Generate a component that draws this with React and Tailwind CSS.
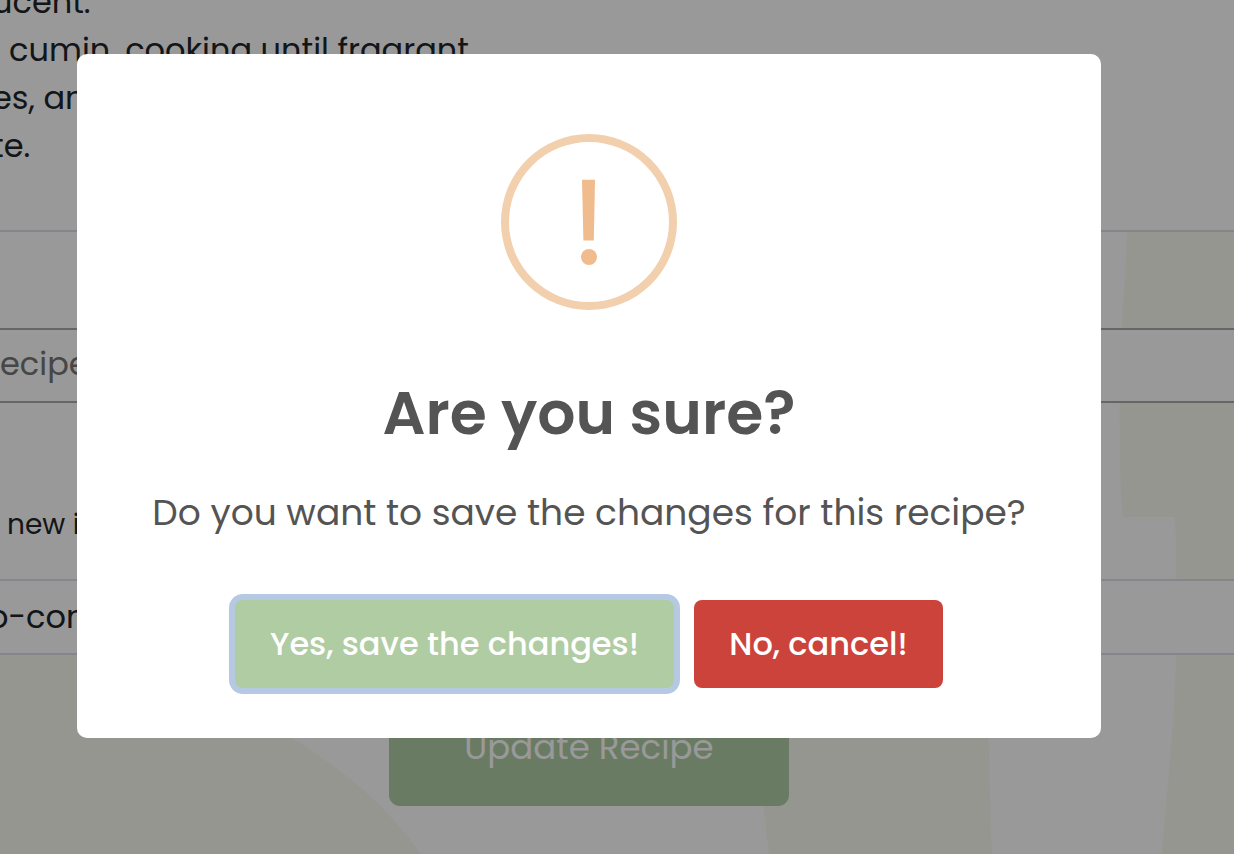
const steps = [
  'ucent.',
  '\u00a0\u00a0cumin, cooking until fragrant.',
  'es, and',
  'te.',
];

function Backdrop() {
  return (
    <svg
      className="pointer-events-none absolute top-0 left-0 h-[854px] w-[1234px] fill-[#f8fbee]"
      viewBox="0 0 1234 854"
      aria-hidden="true"
    >
      <path d="M1129 200 C1126 270 1121 330 1120 380 C1119 440 1120 490 1123 517 H1175 C1177 570 1177 640 1175 690 C1172 750 1165 810 1162 854 H1234 V200 Z" />
      <path d="M0 640 H150 C200 670 250 705 292 738 C350 774 388 808 421 854 H0 Z" />
      <path d="M748 690 C755 750 763 800 769 854 H992 C989 800 990 740 986 690 Z" />
    </svg>
  );
}

function Page() {
  return (
    <main className="relative overflow-hidden bg-white text-[32px] leading-[48px] text-[#212529]">
      <Backdrop />
      <div className="relative">
        <section className="flow-root h-[232px] border-b-2 border-[#dedfe8] bg-white">
          <div className="-mt-[22px] -ml-2 whitespace-nowrap">
            {steps.map((step) => (
              <p key={step}>{step}</p>
            ))}
          </div>
        </section>
        <input
          type="text"
          aria-label="Recipe"
          placeholder="ecipe"
          className="mt-24 block h-[75px] w-full border-y-2 border-[#aaaaaa] bg-white pb-1 placeholder-[#757575] outline-none"
        />
        <label htmlFor="image" className="mt-[98px] ml-[7px] block text-[28px]">
          new image
        </label>
        <input
          id="image"
          type="text"
          readOnly
          defaultValue="o-con"
          className="mt-[30px] -ml-3 block h-[76px] w-[calc(100%+12px)] border-y-2 border-[#dedfe8] bg-white outline-none"
        />
        <div className="flex justify-center pt-[33px] pr-14 pb-12">
          <button
            type="button"
            className="h-[118px] w-[400px] rounded-[11px] bg-[#afcda3] text-[34px] text-white"
          >
            Update Recipe
          </button>
        </div>
      </div>
    </main>
  );
}

function WarningIcon() {
  return (
    <svg className="size-44" viewBox="0 0 176 176" aria-hidden="true">
      <circle cx="88" cy="88" r="84" fill="none" stroke="#f2cfad" strokeWidth="8" />
      <path d="M81 45.700 H94 L92.800 106.500 H82.400 Z" fill="#f0bb8d" />
      <circle cx="88" cy="123" r="8" fill="#f0bb8d" />
    </svg>
  );
}

function ConfirmDialog() {
  return (
    <div className="fixed inset-0 flex items-start justify-center bg-black/40 pt-[54px] pr-14">
      <div
        role="dialog"
        aria-modal="true"
        aria-labelledby="dialog-title"
        aria-describedby="dialog-text"
        className="flex w-[1024px] max-w-full flex-col items-center rounded-[10px] bg-white pt-20 pb-[50px] text-[#545454]"
      >
        <WarningIcon />
        <h2 id="dialog-title" className="mt-[67px] text-[60px] leading-[72px] font-semibold">
          Are you sure?
        </h2>
        <p id="dialog-text" className="mt-[37px] text-[36px] leading-[54px] whitespace-nowrap">
          Do you want to save the changes for this recipe?
        </p>
        <div className="mt-[60px] flex gap-5 text-[32px] font-medium text-white">
          <button
            type="button"
            className="h-[88px] w-[439px] rounded-lg bg-[#b0cca3] ring-6 ring-[#b6c9e3]"
          >
            Yes, save the changes!
          </button>
          <button type="button" className="h-[88px] w-[249px] rounded-lg bg-[#cc433b]">
            No, cancel!
          </button>
        </div>
      </div>
    </div>
  );
}

export default function App() {
  return (
    <div className="font-[Poppins,Inter,sans-serif]">
      <Page />
      <ConfirmDialog />
    </div>
  );
}
